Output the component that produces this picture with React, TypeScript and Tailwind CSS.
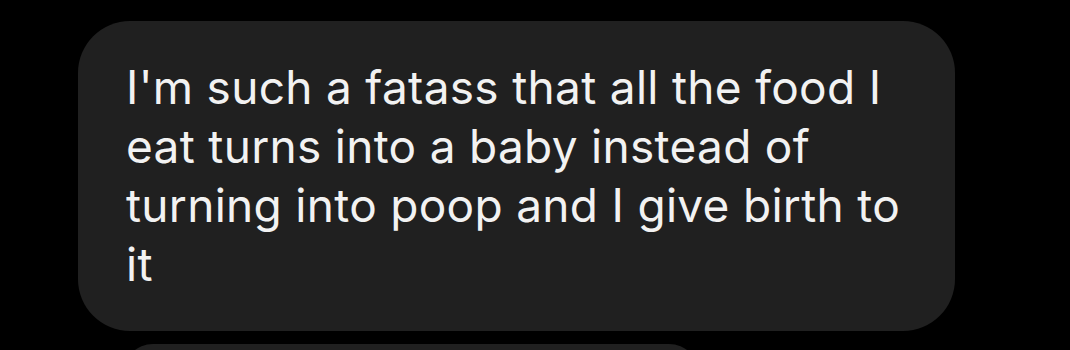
export default function App() {
  return (
    <div className="h-[350px] w-full overflow-hidden bg-black pl-[78px] pt-[21px]">
      <div
        className="w-[877px] rounded-[52px] bg-[#202020] px-[48px] py-[37px] text-[46px] leading-[59px] tracking-[0.3px] text-[#f2f2f2]"
        style={{ fontFamily: "Inter, 'Noto Sans', sans-serif" }}
      >
        I'm such a fatass that all the food I<br />
        eat turns into a baby instead of<br />
        turning into poop and I give birth to<br />
        it
      </div>
      <div className="ml-[45px] mt-[13px] h-[60px] w-[576px] rounded-[40px] bg-[#202020]" />
    </div>
  );
}
